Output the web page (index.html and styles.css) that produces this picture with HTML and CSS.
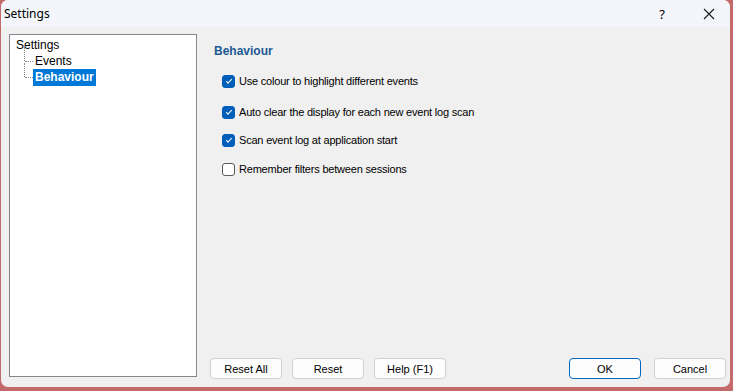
FILE: index.html
```html
<!DOCTYPE html>
<html lang="en">
<head>
    <meta charset="UTF-8">
    <title>Settings</title>
    <link rel="stylesheet" href="styles.css">
</head>
<body>
    <div class="window">
        <div class="titlebar">
            <span class="title">Settings</span>
            <span class="help-btn">?</span>
            <span class="close-btn">
                <svg width="12" height="12" viewBox="0 0 12 12"><path d="M1 1 L11 11 M11 1 L1 11" stroke="#1a1a1a" stroke-width="1.1" fill="none"/></svg>
            </span>
        </div>
        <div class="content">
            <div class="tree">
                <div class="node root">Settings</div>
                <div class="children">
                    <div class="node child"><span class="label">Events</span></div>
                    <div class="node child last"><span class="label selected">Behaviour</span></div>
                </div>
            </div>
            <div class="panel">
                <div class="options">
                    <h2 class="heading">Behaviour</h2>
                    <label class="option first"><span class="box checked"></span>Use colour to highlight different events</label>
                    <label class="option second"><span class="box checked"></span>Auto clear the display for each new event log scan</label>
                    <label class="option"><span class="box checked"></span>Scan event log at application start</label>
                    <label class="option"><span class="box"></span>Remember filters between sessions</label>
                </div>
                <div class="buttons">
                    <button class="btn">Reset All</button>
                    <button class="btn">Reset</button>
                    <button class="btn">Help (F1)</button>
                    <span class="spacer"></span>
                    <button class="btn default">OK</button>
                    <button class="btn">Cancel</button>
                </div>
            </div>
        </div>
    </div>
</body>
</html>
```

FILE: styles.css
```css
body {
    margin: 0;
    background-color: #c56a6a;
    font-family: "Liberation Sans", Arial, sans-serif;
    font-size: 11px;
    color: #000;
}
.window {
    width: 729px;
    height: 387px;
    margin-left: 1px;
    background-color: #f0f0f0;
    border-radius: 7px;
    overflow: hidden;
    display: flex;
    flex-direction: column;
}
.titlebar {
    height: 27px;
    background-color: #f3f5fa;
    display: flex;
    align-items: center;
    font-family: "Noto Sans", "Open Sans", sans-serif;
    font-size: 12px;
}
.title {
    padding-left: 3px;
    flex: 1;
}
.help-btn {
    width: 48px;
    text-align: center;
    font-size: 13px;
}
.close-btn {
    width: 42px;
    display: flex;
    justify-content: center;
    padding-left: 2px;
}
.content {
    flex: 1;
    display: flex;
    padding: 7px 4px 8px 8px;
}
.tree {
    width: 188px;
    height: 343px;
    box-sizing: border-box;
    background-color: #fff;
    border: 1px solid #828790;
    padding: 2px 0 0 6px;
    font-size: 12px;
}
.node {
    height: 16px;
    line-height: 16px;
}
.children {
    margin-left: 8px;
}
.child {
    position: relative;
    padding-left: 9px;
}
.child::before {
    content: "";
    position: absolute;
    left: 0;
    top: -6px;
    height: 14px;
    border-left: 1px dotted #888;
}
.child::after {
    content: "";
    position: absolute;
    left: 1px;
    top: 8px;
    width: 8px;
    border-top: 1px dotted #888;
}
.label {
    padding: 0 2px;
}
.selected {
    display: inline-block;
    background-color: #0078d7;
    color: #fff;
    font-weight: bold;
    height: 17px;
    line-height: 17px;
}
.panel {
    flex: 1;
    display: flex;
    flex-direction: column;
    justify-content: space-between;
    padding-left: 13px;
}
.options {
    padding-left: 4px;
}
.heading {
    margin: 10px 0 16px;
    font-size: 12px;
    font-weight: bold;
    color: #1c5a94;
}
.option {
    display: flex;
    align-items: center;
    gap: 4px;
    height: 14px;
    margin: 0 0 15px 8px;
    letter-spacing: -0.2px;
}
.option.first {
    margin-bottom: 17px;
}
.option.second {
    margin-bottom: 14px;
}
.box {
    width: 13px;
    height: 13px;
    box-sizing: border-box;
    border: 1px solid #5a5a5a;
    border-radius: 3px;
    background-color: #fff;
    display: flex;
    align-items: center;
    justify-content: center;
}
.box.checked {
    border-color: #005fb8;
    background-color: #005fb8;
}
.box.checked::after {
    content: "";
    width: 5px;
    height: 2px;
    border-left: 1px solid #fff;
    border-bottom: 1px solid #fff;
    transform: rotate(-45deg);
    margin-top: -2px;
}
.buttons {
    display: flex;
    gap: 10px;
}
.spacer {
    flex: 1;
}
.btn {
    width: 72px;
    height: 21px;
    background-color: #fdfdfd;
    border: 1px solid #d0d0d0;
    border-radius: 4px;
    font-family: "Liberation Sans", Arial, sans-serif;
    font-size: 11px;
    color: #000;
    padding: 0;
}
.btn.default {
    border-color: #0067c0;
    margin-right: 3px;
}
```
